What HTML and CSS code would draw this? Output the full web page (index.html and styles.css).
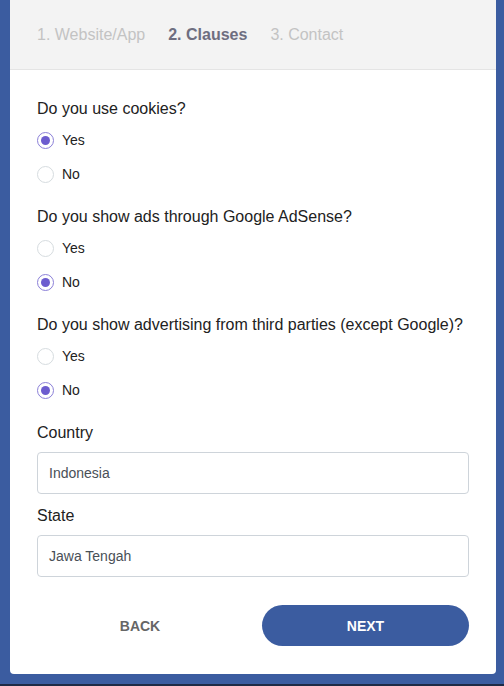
FILE: index.html
```html
<!DOCTYPE html>
<html>
<head>
<meta charset="utf-8">
<link rel="stylesheet" href="styles.css">
</head>
<body>
<div class="page">
  <div class="card">
    <div class="steps">
      <span class="step">1. Website/App</span>
      <span class="step active">2. Clauses</span>
      <span class="step">3. Contact</span>
    </div>
    <div class="body">
      <div class="group">
        <div class="question">Do you use cookies?</div>
        <div class="radio"><span class="dot on"></span><span>Yes</span></div>
        <div class="radio"><span class="dot"></span><span>No</span></div>
      </div>
      <div class="group">
        <div class="question">Do you show ads through Google AdSense?</div>
        <div class="radio"><span class="dot"></span><span>Yes</span></div>
        <div class="radio"><span class="dot on"></span><span>No</span></div>
      </div>
      <div class="group">
        <div class="question">Do you show advertising from third parties (except Google)?</div>
        <div class="radio"><span class="dot"></span><span>Yes</span></div>
        <div class="radio"><span class="dot on"></span><span>No</span></div>
      </div>
      <div class="field">
        <div class="label">Country</div>
        <div class="input">Indonesia</div>
      </div>
      <div class="field">
        <div class="label">State</div>
        <div class="input">Jawa Tengah</div>
      </div>
      <div class="actions">
        <div class="back">BACK</div>
        <div class="next">NEXT</div>
      </div>
    </div>
  </div>
</div>
<div class="bottomline"></div>
</body>
</html>
```
FILE: styles.css
```css
html, body {
  margin: 0;
  padding: 0;
}
body {
  background: #3b5ca0;
  font-family: "Liberation Sans", Arial, sans-serif;
  width: 504px;
  height: 686px;
  overflow: hidden;
}
.page {
  height: 684px;
  padding: 0 8px 0 10px;
  box-sizing: border-box;
}
.card {
  background: #fff;
  width: 486px;
  height: 674px;
  border-radius: 0 0 4px 4px;
  overflow: hidden;
}
.steps {
  height: 69px;
  background: #f3f3f3;
  border-bottom: 1px solid #e4e4e4;
  display: flex;
  align-items: center;
  gap: 23px;
  padding-left: 27px;
  font-size: 16px;
}
.step {
  color: #c3c3c3;
}
.step.active {
  color: #6e6e80;
  font-weight: bold;
}
.body {
  padding: 28px 27px 28px 27px;
}
.group {
  margin-bottom: 15px;
}
.question, .label {
  font-size: 16px;
  line-height: 22px;
  color: #222;
}
.question {
  margin-bottom: 3px;
}
.radio {
  height: 34px;
  display: flex;
  align-items: center;
  font-size: 14px;
  color: #222;
}
.dot {
  width: 15px;
  height: 15px;
  border: 1px solid #d6dcdf;
  border-radius: 50%;
  margin-right: 8px;
  position: relative;
  box-sizing: content-box;
}
.dot.on {
  border-color: #8b80d8;
}
.dot.on::after {
  content: "";
  position: absolute;
  left: 3px;
  top: 3px;
  width: 9px;
  height: 9px;
  border-radius: 50%;
  background: #6c5ccf;
}
.field {
  margin-bottom: 11px;
}
.label {
  margin-bottom: 8px;
}
.input {
  height: 42px;
  box-sizing: border-box;
  border: 1px solid #ced4da;
  border-radius: 4px;
  padding-left: 11px;
  display: flex;
  align-items: center;
  font-size: 14px;
  color: #495057;
}
.actions {
  margin-top: 28px;
  display: flex;
  justify-content: space-between;
  align-items: center;
  height: 41px;
}
.back {
  width: 206px;
  text-align: center;
  font-size: 14px;
  font-weight: bold;
  color: #666;
}
.next {
  width: 207px;
  height: 41px;
  border-radius: 21px;
  background: #3b5ca0;
  color: #fff;
  font-size: 14px;
  font-weight: bold;
  display: flex;
  align-items: center;
  justify-content: center;
}
.bottomline {
  height: 2px;
  background: #1e2a45;
}
```
